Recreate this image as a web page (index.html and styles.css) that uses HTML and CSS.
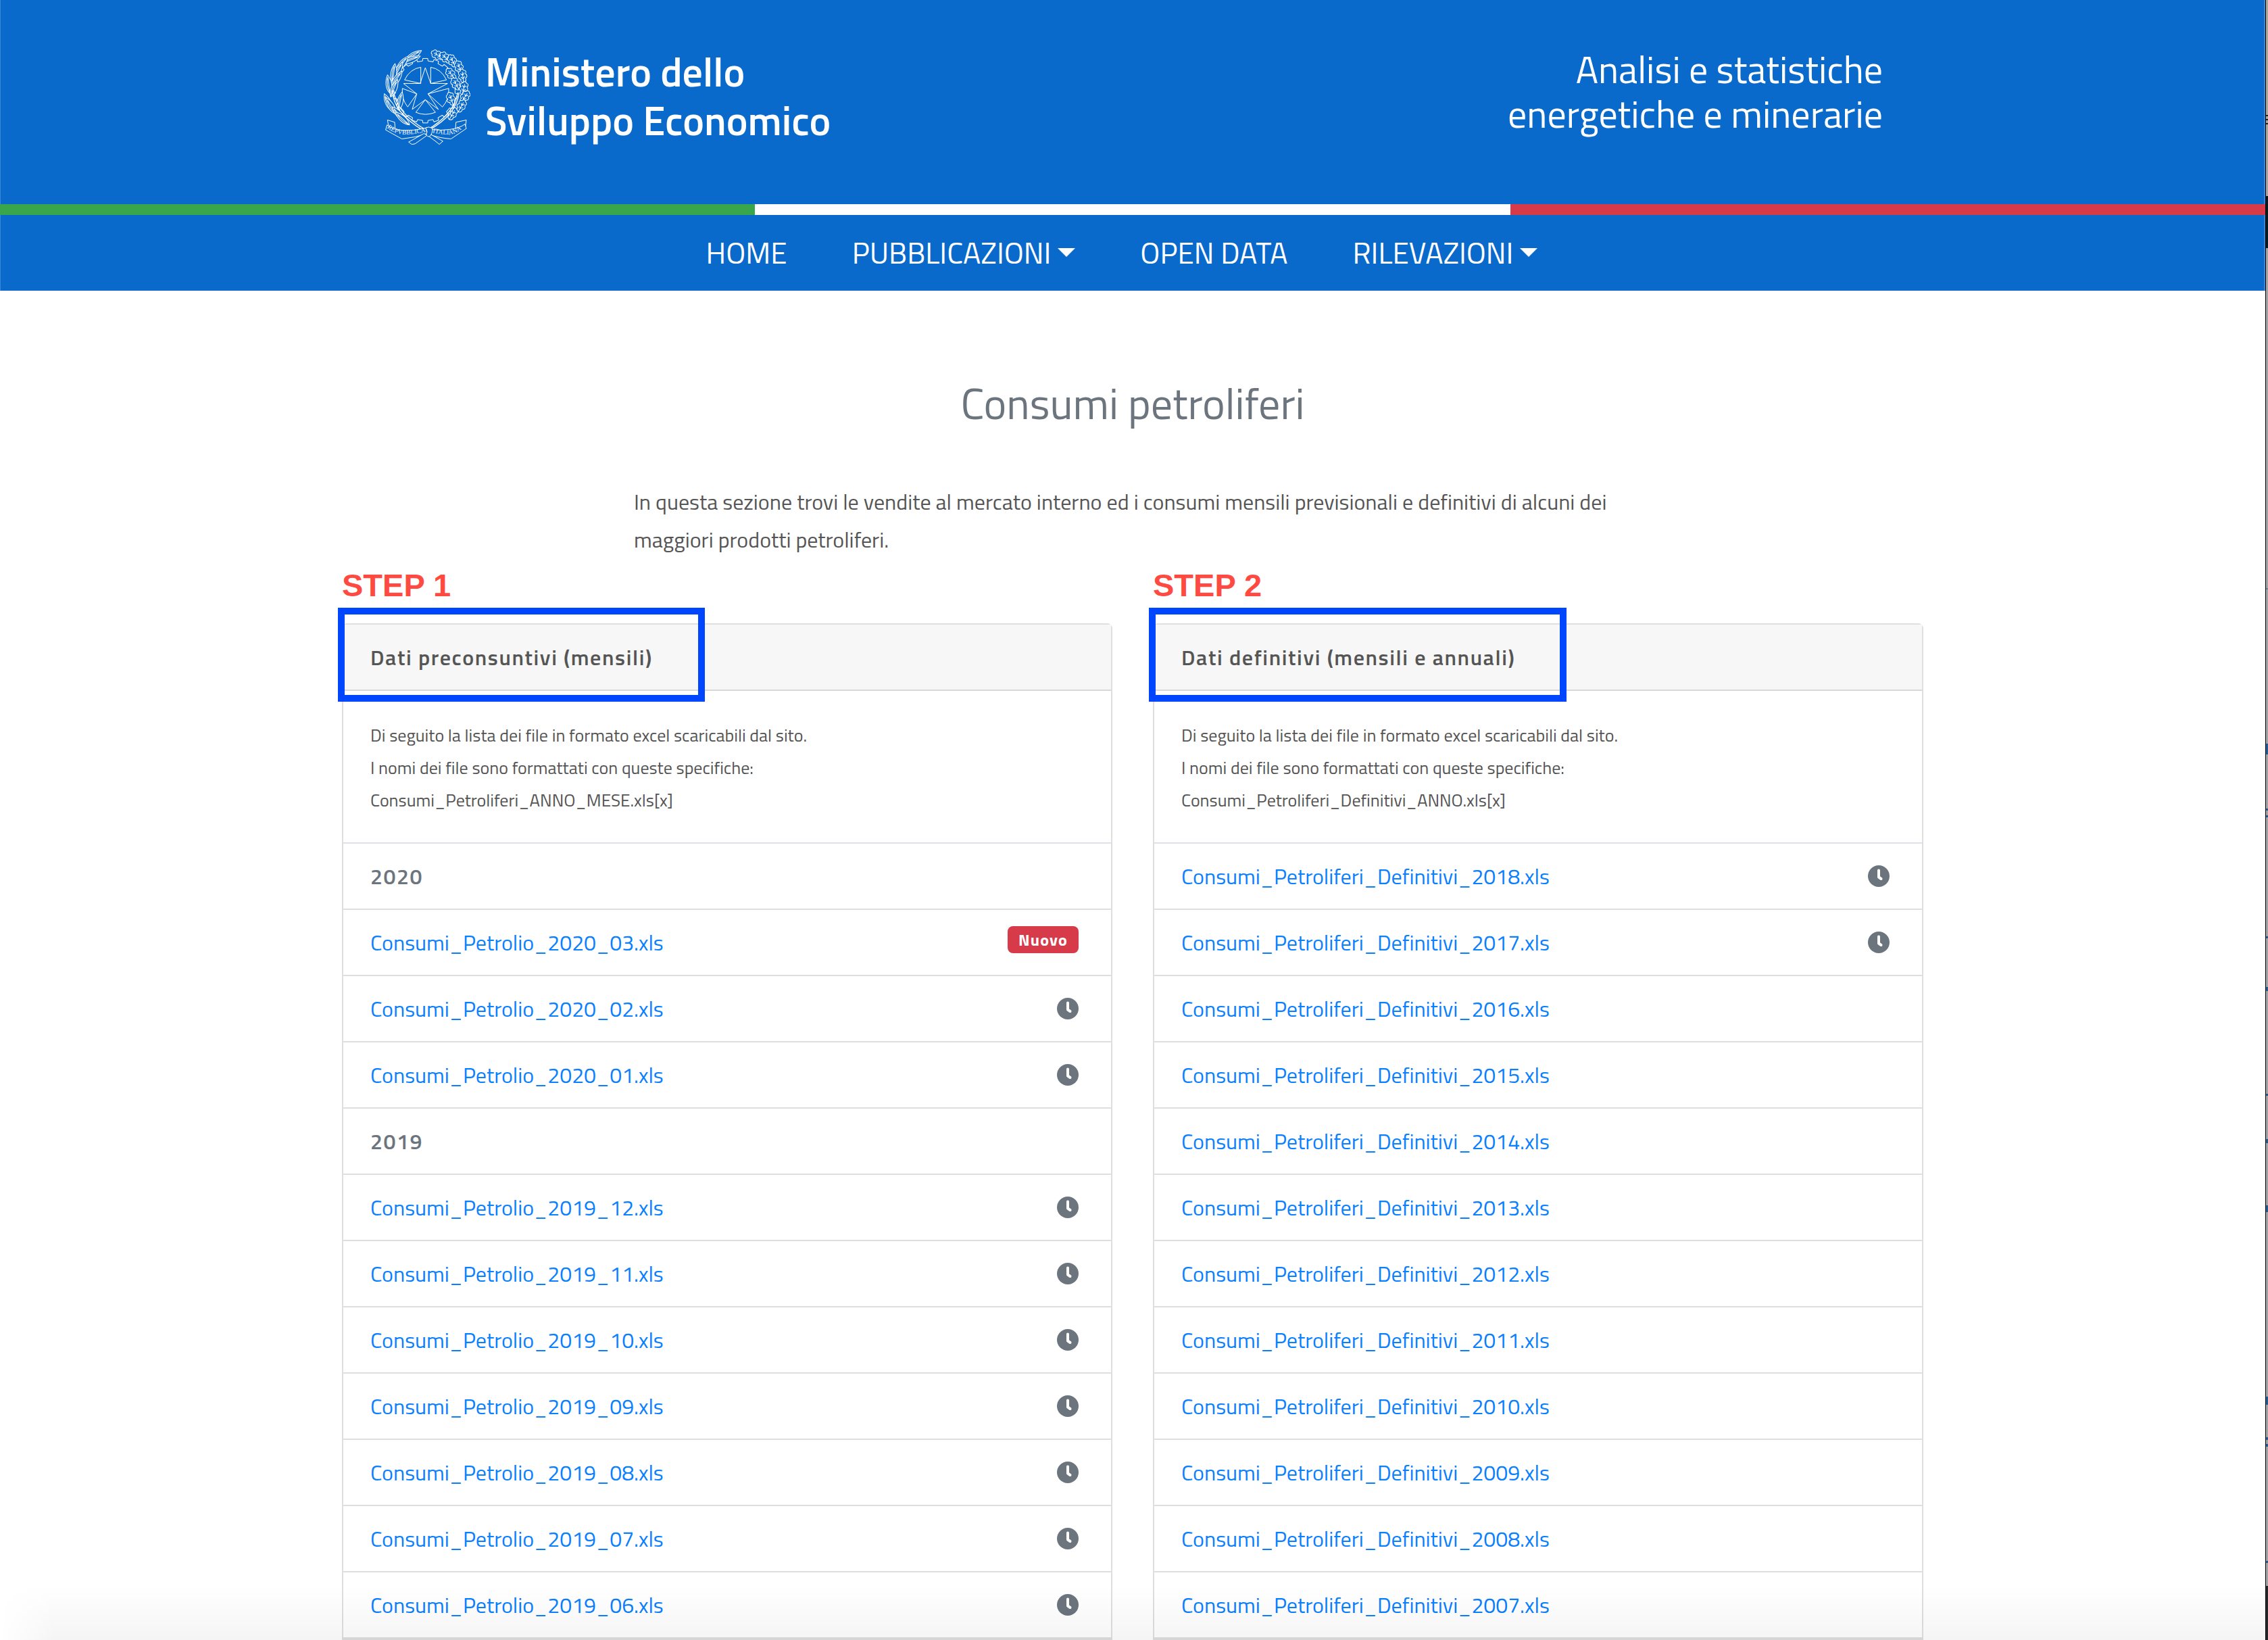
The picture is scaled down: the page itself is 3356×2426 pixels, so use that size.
FILE: index.html
```html
<!DOCTYPE html>
<html lang="it">
<head>
<meta charset="utf-8">
<meta name="viewport" content="width=device-width, initial-scale=1">
<title>Consumi petroliferi</title>
<link rel="stylesheet" href="styles.css">
</head>
<body>
<svg class="defs" width="0" height="0" aria-hidden="true">
  <symbol id="clock" viewBox="0 0 32 32">
    <circle cx="16" cy="16" r="16" fill="#6c757d"/>
    <path d="M16 7.500V17.500L19.500 20" fill="none" stroke="#fff" stroke-width="4" stroke-linecap="round" stroke-linejoin="round"/>
  </symbol>
</svg>
<div class="shell">
<div class="page">
  <header class="header">
    <div class="brand">
      <svg class="emblem" viewBox="48 30 390 437" role="img" aria-label="Repubblica Italiana">
        <defs>
          <path id="tooth" d="M-23 -130L-12 -132L-11 -143H11L12 -132L23 -130"/>
          <path id="leaf" d="M0 0C-17 -22 -17 -55 0 -84C17 -55 17 -22 0 0ZM0 0V-74M0 -4C-8 -28 -8 -50 -2 -70"/>
          <path id="oak" d="M0 0C-9 -3 -15 -9 -9 -16C-20 -18 -23 -28 -13 -34C-21 -42 -16 -52 -8 -52C-8 -60 5 -63 8 -54C17 -54 20 -44 13 -38C22 -32 20 -21 11 -19C15 -9 9 -2 0 0ZM0 0L1 -48M0 -18L-9 -26M1 -18L10 -27M1 -32L-8 -41M1 -33L9 -43"/>
          <path id="motto-left" d="M68 386Q104 418 154 416Q210 413 242 404"/>
          <path id="motto-right" d="M270 408Q316 418 352 416Q390 407 416 376"/>
        </defs>
        <g fill="none" stroke="#fff" stroke-width="3" stroke-linejoin="round">
          <g transform="translate(238 222)">
            <use href="#tooth"/><use href="#tooth" transform="rotate(20)"/><use href="#tooth" transform="rotate(40)"/>
            <use href="#tooth" transform="rotate(60)"/><use href="#tooth" transform="rotate(80)"/><use href="#tooth" transform="rotate(100)"/>
            <use href="#tooth" transform="rotate(120)"/><use href="#tooth" transform="rotate(140)"/><use href="#tooth" transform="rotate(160)"/>
            <use href="#tooth" transform="rotate(180)"/><use href="#tooth" transform="rotate(200)"/><use href="#tooth" transform="rotate(220)"/>
            <use href="#tooth" transform="rotate(240)"/><use href="#tooth" transform="rotate(260)"/><use href="#tooth" transform="rotate(280)"/>
            <use href="#tooth" transform="rotate(300)"/><use href="#tooth" transform="rotate(320)"/><use href="#tooth" transform="rotate(340)"/>
          </g>
          <path d="M238 120L262 190H337L250 236L296 305L238 262L180 305L200 236L141 190H215Z"/>
          <path d="M218 190V118Q170 125 146 174Z"/>
          <path d="M262 190V118Q308 125 332 174Z"/>
          <path d="M200 236L136 212Q132 260 160 294Z"/>
          <path d="M250 236L342 212Q345 260 314 294Z"/>
          <path d="M238 262L196 318Q238 336 283 318Z"/>
          <g fill="#096acb">
            <use href="#leaf" transform="translate(150 88) rotate(58)"/>
            <use href="#leaf" transform="translate(138 100) rotate(68)"/>
            <use href="#leaf" transform="translate(110 135) rotate(38)"/>
            <use href="#leaf" transform="translate(98 170) rotate(28)"/>
            <use href="#leaf" transform="translate(92 185) rotate(8)"/>
            <use href="#leaf" transform="translate(88 205) rotate(34)"/>
            <use href="#leaf" transform="translate(82 235) rotate(-8)"/>
            <use href="#leaf" transform="translate(84 250) rotate(22)"/>
            <use href="#leaf" transform="translate(90 312) rotate(-24)"/>
            <use href="#leaf" transform="translate(106 325) rotate(-30)"/>
            <use href="#leaf" transform="translate(118 310) rotate(12)"/>
            <use href="#leaf" transform="translate(148 356) rotate(-42)"/>
            <use href="#leaf" transform="translate(168 374) rotate(-48)"/>
            <use href="#oak" transform="translate(318 78) rotate(-62)"/>
            <use href="#oak" transform="translate(348 96) rotate(-46)"/>
            <use href="#oak" transform="translate(372 116) rotate(-28)"/>
            <use href="#oak" transform="translate(398 146) rotate(-20)"/>
            <use href="#oak" transform="translate(370 172) rotate(-38)"/>
            <use href="#oak" transform="translate(408 186) rotate(-8)"/>
            <use href="#oak" transform="translate(388 218) rotate(-30)"/>
            <use href="#oak" transform="translate(402 240) rotate(12)"/>
            <use href="#oak" transform="translate(398 274) rotate(32)"/>
            <use href="#oak" transform="translate(362 286) rotate(-20)"/>
            <use href="#oak" transform="translate(384 316) rotate(28)"/>
            <use href="#oak" transform="translate(344 350) rotate(30)"/>
          </g>
          <path d="M92 220Q94 320 232 400M98 220Q104 316 240 396M388 230Q376 330 252 398M382 230Q366 326 246 396" stroke-width="4"/>
          <g fill="#096acb">
            <path d="M76 386L70 352L102 362L104 388"/>
            <path d="M416 382L420 352L374 362L372 390"/>
            <path d="M240 388Q190 400 140 398Q96 396 68 374L62 396L134 436Q196 430 246 412Z"/>
            <path d="M262 394Q310 400 346 394Q392 388 414 370L420 390L352 436Q300 432 262 418Z"/>
            <path d="M232 412L164 450L178 460L192 458L246 420ZM262 416L316 446L300 460L288 450L256 426Z"/>
            <path d="M240 386Q254 380 268 388Q274 408 256 426Q236 424 246 404Z"/>
          </g>
        </g>
        <g class="motto">
          <text><textPath href="#motto-left">REPVBBLICA</textPath></text>
          <text><textPath href="#motto-right">ITALIANA</textPath></text>
        </g>
      </svg>
      <div class="ministry">Ministero dello<br>Sviluppo Economico</div>
    </div>
    <div class="site-name">Analisi e statistiche<br>energetiche e minerarie</div>
  </header>
  <div class="flag"><span class="green"></span><span class="white"></span><span class="red"></span></div>
  <nav class="nav">
    <a href="#">HOME</a>
    <a href="#" class="drop">PUBBLICAZIONI</a>
    <a href="#">OPEN DATA</a>
    <a href="#" class="drop">RILEVAZIONI</a>
  </nav>
  <main>
    <h1>Consumi petroliferi</h1>
    <p class="intro">In questa sezione trovi le vendite al mercato interno ed i consumi mensili previsionali e definitivi di alcuni dei maggiori prodotti petroliferi.</p>
    <div class="columns">
      <section>
        <div class="step">STEP 1</div>
        <div class="card">
          <h2>Dati preconsuntivi (mensili)</h2>
          <div class="mark mark-one"></div>
          <p class="note">Di seguito la lista dei file in formato excel scaricabili dal sito.<br>I nomi dei file sono formattati con queste specifiche:<br>Consumi_Petroliferi_ANNO_MESE.xls[x]</p>
          <ul>
            <li class="year">2020</li>
            <li><a href="#">Consumi_Petrolio_2020_03.xls</a><span class="badge">Nuovo</span></li>
            <li><a href="#">Consumi_Petrolio_2020_02.xls</a><svg class="clock"><use href="#clock"/></svg></li>
            <li><a href="#">Consumi_Petrolio_2020_01.xls</a><svg class="clock"><use href="#clock"/></svg></li>
            <li class="year">2019</li>
            <li><a href="#">Consumi_Petrolio_2019_12.xls</a><svg class="clock"><use href="#clock"/></svg></li>
            <li><a href="#">Consumi_Petrolio_2019_11.xls</a><svg class="clock"><use href="#clock"/></svg></li>
            <li><a href="#">Consumi_Petrolio_2019_10.xls</a><svg class="clock"><use href="#clock"/></svg></li>
            <li><a href="#">Consumi_Petrolio_2019_09.xls</a><svg class="clock"><use href="#clock"/></svg></li>
            <li><a href="#">Consumi_Petrolio_2019_08.xls</a><svg class="clock"><use href="#clock"/></svg></li>
            <li><a href="#">Consumi_Petrolio_2019_07.xls</a><svg class="clock"><use href="#clock"/></svg></li>
            <li><a href="#">Consumi_Petrolio_2019_06.xls</a><svg class="clock"><use href="#clock"/></svg></li>
          </ul>
        </div>
      </section>
      <section>
        <div class="step">STEP 2</div>
        <div class="card">
          <h2>Dati definitivi (mensili e annuali)</h2>
          <div class="mark mark-two"></div>
          <p class="note">Di seguito la lista dei file in formato excel scaricabili dal sito.<br>I nomi dei file sono formattati con queste specifiche:<br>Consumi_Petroliferi_Definitivi_ANNO.xls[x]</p>
          <ul>
            <li><a href="#">Consumi_Petroliferi_Definitivi_2018.xls</a><svg class="clock"><use href="#clock"/></svg></li>
            <li><a href="#">Consumi_Petroliferi_Definitivi_2017.xls</a><svg class="clock"><use href="#clock"/></svg></li>
            <li><a href="#">Consumi_Petroliferi_Definitivi_2016.xls</a></li>
            <li><a href="#">Consumi_Petroliferi_Definitivi_2015.xls</a></li>
            <li><a href="#">Consumi_Petroliferi_Definitivi_2014.xls</a></li>
            <li><a href="#">Consumi_Petroliferi_Definitivi_2013.xls</a></li>
            <li><a href="#">Consumi_Petroliferi_Definitivi_2012.xls</a></li>
            <li><a href="#">Consumi_Petroliferi_Definitivi_2011.xls</a></li>
            <li><a href="#">Consumi_Petroliferi_Definitivi_2010.xls</a></li>
            <li><a href="#">Consumi_Petroliferi_Definitivi_2009.xls</a></li>
            <li><a href="#">Consumi_Petroliferi_Definitivi_2008.xls</a></li>
            <li><a href="#">Consumi_Petroliferi_Definitivi_2007.xls</a></li>
          </ul>
        </div>
      </section>
    </div>
  </main>
</div>
<div class="edge"></div>
</div>
<div class="shade"></div>
</body>
</html>
```
FILE: styles.css
```css
* { box-sizing: border-box; }

body {
  margin: 0;
  background: #fff;
  color: #555;
  font-family: "Titillium Web", Roboto, sans-serif;
}

a { text-decoration: none; }

.defs { position: absolute; }

.shell {
  display: grid;
  grid-template-columns: minmax(0, 1fr) 4px;
}

.edge {
  border-left: 1px solid #000;
  background: linear-gradient(
    #aaa99c 0 170px, #222 170px 172px, #aaa99c 172px 176px, #222 176px 178px, #aaa99c 178px 182px, #222 182px 184px, #aaa99c 184px 250px,
    #a6a6a8 250px 290px, #061a24 290px 367px, #a3a5a6 367px 870px, #5f85a0 870px 872px, #a3a5a6 872px 1100px,
    #1f5f95 1100px 1116px, #a3a5a6 1116px 1196px, #1f5f95 1196px 1199px, #a3a5a6 1199px 1206px, #1f5f95 1206px 1209px, #a3a5a6 1209px 1385px,
    #1f5f95 1385px 1388px, #a3a5a6 1388px 1460px, #1f5f95 1460px 1466px, #a3a5a6 1466px 1618px, #1f5f95 1618px 1621px, #a3a5a6 1621px 1685px,
    #1f5f95 1685px 1691px, #a3a5a6 1691px 1783px, #1f5f95 1783px 1793px, #a3a5a6 1793px 2066px, #1f5f95 2066px 2078px, #a3a5a6 2078px 2126px,
    #1f5f95 2126px 2130px, #a3a5a6 2130px 2136px, #1f5f95 2136px 2140px, #a3a5a6 2140px 2309px, #1f5f95 2309px 2312px, #a3a5a6 2312px 2346px,
    #26292b 2346px);
}

.header {
  display: flex;
  justify-content: space-between;
  padding: 70px 566px 0;
  height: 302px;
  background: #096acb;
  color: #fff;
}

.header,
.nav {
  box-shadow: inset -2px 0 #3d86d6, inset 1px 0 #3d86d6;
}

.brand {
  display: flex;
  gap: 22px;
}

.emblem {
  width: 130px;
  height: 146px;
}

.motto {
  fill: #fff;
  font-family: "Liberation Serif", serif;
  font-size: 29px;
}

.ministry {
  font-size: 60px;
  font-weight: 600;
  line-height: 72px;
}

.site-name {
  font-size: 56px;
  line-height: 66px;
  text-align: right;
}

.flag {
  display: grid;
  grid-template-columns: repeat(3, 1fr);
  height: 16px;
}

.green { background: #3aa64c; }
.white { background: #fff; }
.red { background: #d73a49; }

.nav {
  display: flex;
  justify-content: center;
  gap: 96px;
  padding-right: 32px;
  background: #096acb;
}

.nav a {
  color: #fff;
  font-size: 44px;
  line-height: 112px;
}

.drop::after {
  content: "";
  display: inline-block;
  margin-left: 10px;
  border: 13px solid transparent;
  border-top-color: #fff;
  border-bottom: 0;
  vertical-align: 10px;
}

h1 {
  margin: 0;
  padding-top: 126px;
  color: #6c757d;
  font-size: 64px;
  font-weight: 400;
  line-height: 80px;
  text-align: center;
}

.intro {
  max-width: 1480px;
  margin: 78px auto 0;
  padding-left: 2px;
  font-size: 32px;
  line-height: 56px;
}

.columns {
  display: grid;
  grid-template-columns: 1fr 1fr;
  gap: 60px;
  max-width: 2340px;
  margin: 12px auto 0;
}

.step {
  color: #ff4a42;
  font: bold 47px/56px "Liberation Sans", sans-serif;
  margin-bottom: 28px;
}

.card {
  position: relative;
  border: 2px solid #dfdfdf;
  border-radius: 8px 8px 0 0;
}

h2 {
  margin: 0;
  padding: 0 40px;
  background: #f7f7f7;
  border-bottom: 2px solid #d8d8d8;
  font-size: 32px;
  font-weight: 600;
  letter-spacing: 0.05em;
  line-height: 96px;
}

.mark {
  position: absolute;
  top: -25px;
  left: -8px;
  height: 139px;
  border: 10px solid #0046ff;
}

.mark-one { width: 543px; }
.mark-two { width: 618px; }

.note {
  margin: 0;
  padding: 42px 40px 38px;
  font-size: 26px;
  line-height: 48px;
}

ul {
  margin: 0;
  padding: 0;
  list-style: none;
  border-top: 2px solid #dee2e6;
}

li {
  display: flex;
  align-items: center;
  justify-content: space-between;
  height: 98px;
  padding: 0 48px 0 40px;
  border-bottom: 2px solid #dfdfdf;
  font-size: 32px;
  line-height: 48px;
}

li a { color: #0a80ff; }

.year {
  color: #6c757d;
  font-weight: 600;
  letter-spacing: 0.05em;
}

.badge {
  margin-bottom: 8px;
  padding: 0 16px;
  border-radius: 8px;
  background: #d73a49;
  color: #fff;
  font-size: 24px;
  font-weight: 700;
  letter-spacing: 0.05em;
  line-height: 40px;
}

.clock {
  width: 32px;
  height: 32px;
}

.shade {
  position: fixed;
  inset: auto 4px 0 0;
  height: 80px;
  background: linear-gradient(transparent, rgba(0, 0, 0, 0.04));
  mask-image: linear-gradient(90deg, transparent, #000 80px);
  pointer-events: none;
}
```
